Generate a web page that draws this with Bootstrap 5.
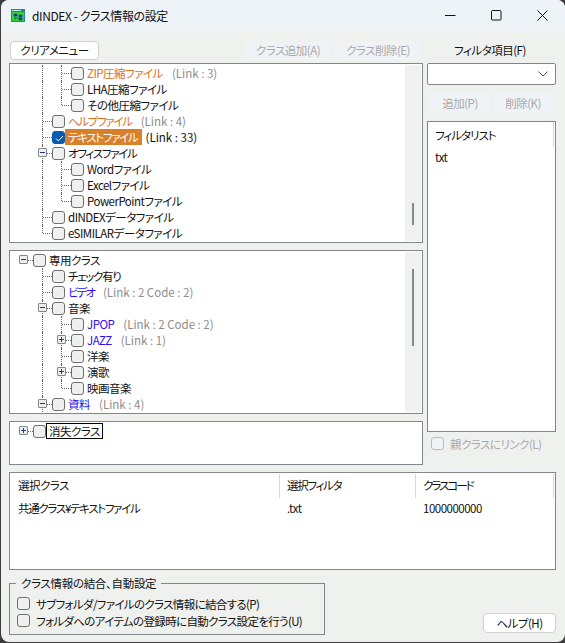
<!DOCTYPE html>
<html lang="ja">
<head>
    <meta charset="UTF-8">
    <title>dINDEX - クラス情報の設定</title>
    <link href="https://cdn.jsdelivr.net/npm/bootstrap@5.3.3/dist/css/bootstrap.min.css" rel="stylesheet">
    <style>
        html, body { height: 100%; }
        body { background: #3c3c3c; font: 11.5px/16px "Noto Sans CJK JP", sans-serif; font-feature-settings: "palt"; letter-spacing: -.5px; color: #111; overflow: hidden; white-space: nowrap; }
        .win { width: 564px; height: 642px; margin-left: 1px; background: #eff1ef; border-radius: 8px; overflow: hidden; }
        .titlebar { height: 31px; background: #eef3f8; font-size: 12px; letter-spacing: -.4px; }
        .title-icon { margin: 0 7px 0 10px; }
        .winbtn { width: 46px; height: 31px; }
        .client { height: 611px; padding: 10px 8px 0 8px; }
        .left-col { width: 414px; }
        .right-col { width: 129px; }
        .toolrow { height: 19px; margin: 0 2px 3px 1px; }
        .btn-win { height: 19px; padding: 0; font-size: 11.5px; font-feature-settings: "palt"; letter-spacing: -.5px; line-height: 17px; border-radius: 4px; border: 1px solid #d0d0d0; background: #fff; color: #111; }
        .btn-win:disabled { background: #f0f3f6; border-color: #f0f3f6; color: #a9a9a9; opacity: 1; }
        .btn-clear { width: 89px; }
        .btn-cls { width: 86px; }
        .panel { background: #fff; border: 1px solid #80868b; position: relative; overflow: hidden; padding-top: 1px; }
        .panel-a { height: 180px; margin-bottom: 7px; }
        .panel-b { height: 164px; margin-bottom: 7px; }
        .panel-c { height: 44px; }
        .fake-scroll { position: absolute; top: 1px; bottom: 1px; right: 1px; width: 16px; background: #eff1ef; }
        .fake-thumb { position: absolute; left: 7px; width: 2px; background: #858a8f; }
        .tw-row { height: 16px; display: flex; align-items: center; padding-left: 4px; white-space: nowrap; }
        .tw-cell { width: 19px; height: 16px; flex: none; position: relative; }
        .tw-v::before, .tw-t::before, .tw-l::before { content: ""; position: absolute; left: 9px; top: 0; bottom: 0; border-left: 1px dotted #666; }
        .tw-l::before { bottom: 8px; }
        .tw-t::after, .tw-l::after, .tw-h::after { content: ""; position: absolute; left: 10px; right: 0; top: 8px; border-top: 1px dotted #666; }
        .tw-x { position: absolute; z-index: 1; left: 5px; top: 3px; width: 9px; height: 9px; background: #eef0f0; border: 1px solid #80868b; border-radius: 1px; }
        .tw-x::before { content: ""; position: absolute; left: 1px; right: 1px; top: 3px; height: 1px; background: #23388c; }
        .tw-plus::after { content: ""; position: absolute; top: 1px; bottom: 1px; left: 3px; width: 1px; background: #23388c; }
        .chk { width: 13px; height: 13px; flex: none; background: #eff1ef; border: 1px solid #6e6e6e; border-radius: 3px; }
        .chk-on { background: #0a5cb0; border-color: #0a5cb0; position: relative; }
        .chk-off { background: #f0f3f6; border-color: #b8bcc0; }
        .chk-on svg { position: absolute; left: 1px; top: 1px; }
        .tw-text { padding: 0 3px; height: 16px; line-height: 16px; }
        .tw-link { color: #8d8d8d; margin-left: 6px; letter-spacing: 0; }
        .txt-kana { letter-spacing: -1.3px; }
        .txt-tight { letter-spacing: -2px; }
        .c-orange { color: #e07020; }
        .c-blue { color: #2a10f0; }
        .tw-sel { background: #d9802a; color: #fff; padding-right: 4px; }
        .tw-focus { outline: 1px solid #000; outline-offset: -1px; }
        .tw-on { color: #111; }
        .flt-label { height: 19px; margin-bottom: 3px; line-height: 19px; text-align: center; padding-right: 3px; }
        .flt-select { height: 22px; background: #fff; border: 1px solid #80868b; border-radius: 2px; padding-right: 7px; margin-bottom: 8px; }
        .flt-btns { gap: 3px; padding: 0 3px; margin-bottom: 7px; }
        .flt-btns .btn-win { flex: 1; height: 21px; }
        .flt-list { height: 311px; padding: 5px 7px; }
        .flt-head { height: 22px; line-height: 16px; letter-spacing: -1px; }
        .flt-sep { position: absolute; top: 0; right: 1px; width: 1px; height: 25px; background: #d8d8d8; }
        .parent-link { height: 21px; padding-left: 4px; gap: 6px; margin-top: 1px; color: #a9a9a9; }
        .detail { height: 98px; width: 547px; margin: 7px 0 13px 0; }
        .det-head { height: 24px; display: flex; }
        .det-row { display: flex; padding-top: 2px; }
        .dc-1 { width: 270px; padding-left: 8px; }
        .dc-2 { width: 136px; padding-left: 7px; }
        .dc-3 { width: 138px; padding-left: 7px; }
        .det-head .dc-1, .det-head .dc-2, .det-head .dc-3 { border-right: 1px solid #d8d8d8; height: 24px; padding-top: 3px; }
        .bottom-row { width: 547px; }
        .grp { width: 316px; height: 52px; border: 1px solid #80868b; position: relative; padding: 11px 7px 0 7px; }
        .grp-title { position: absolute; top: -9px; left: 6px; padding: 0 5px; background: #eff1ef; letter-spacing: -.3px; }
        .grp-item { height: 17px; gap: 6px; letter-spacing: -.65px; }
        .btn-help { width: 73px; height: 20px; margin-top: 30px; }
    </style>
</head>
<body>
    <div class="win d-flex flex-column">
        <div class="titlebar d-flex align-items-center">
            <svg class="title-icon" width="14" height="13" viewBox="0 0 14 13">
                <rect width="14" height="13" fill="#2a7f9a"/>
                <rect x="1" y="3" width="12" height="9" fill="#35d335"/>
                <rect x="1" y="1" width="9" height="1" fill="#bfe8f0"/>
                <path d="M3 5h3v2H3zM4 7v4M4 9h4M8 6h3v2H8zM8 9h3v2H8z" fill="#123d8c" stroke="#123d8c" stroke-width=".6"/>
            </svg>
            <span class="flex-grow-1">dINDEX - クラス情報の設定</span>
            <span class="winbtn d-flex align-items-center justify-content-center"><svg width="11" height="11"><path d="M0 5.5h10.5" stroke="#111"/></svg></span>
            <span class="winbtn d-flex align-items-center justify-content-center"><svg width="11" height="11"><rect x=".5" y=".5" width="9.5" height="9.5" rx="1" fill="none" stroke="#111"/></svg></span>
            <span class="winbtn d-flex align-items-center justify-content-center"><svg width="11" height="11"><path d="M.5.5l10 10M10.5.5l-10 10" stroke="#111"/></svg></span>
        </div>
        <div class="client d-flex flex-column">
            <div class="d-flex gap-1">
                <div class="left-col">
                    <div class="toolrow d-flex">
                        <button class="btn-win btn-clear">クリアメニュー</button>
                        <button class="btn-win btn-cls ms-auto" disabled>クラス追加(A)</button>
                        <button class="btn-win btn-cls ms-1" disabled>クラス削除(E)</button>
                    </div>
                    <div class="panel panel-a">
                        <div class="tw-row"><i class="tw-cell"></i><i class="tw-cell tw-v"></i><i class="tw-cell tw-t"></i><i class="chk"></i><span class="tw-text c-orange">ZIP圧縮ファイル</span><span class="tw-link">(Link : 3)</span></div>
                        <div class="tw-row"><i class="tw-cell"></i><i class="tw-cell tw-v"></i><i class="tw-cell tw-t"></i><i class="chk"></i><span class="tw-text">LHA圧縮ファイル</span></div>
                        <div class="tw-row"><i class="tw-cell"></i><i class="tw-cell tw-v"></i><i class="tw-cell tw-l"></i><i class="chk"></i><span class="tw-text">その他圧縮ファイル</span></div>
                        <div class="tw-row"><i class="tw-cell"></i><i class="tw-cell tw-t"></i><i class="chk"></i><span class="tw-text txt-kana c-orange">ヘルプファイル</span><span class="tw-link">(Link : 4)</span></div>
                        <div class="tw-row"><i class="tw-cell"></i><i class="tw-cell tw-t"></i><i class="chk chk-on"><svg width="11" height="11" viewBox="0 0 11 11"><path d="M2 5.5l2.4 2.4L9 3" fill="none" stroke="#fff" stroke-width="1"/></svg></i><span class="tw-text txt-kana tw-sel">テキストファイル</span><span class="tw-link tw-on ms-1">(Link : 33)</span></div>
                        <div class="tw-row"><i class="tw-cell"></i><i class="tw-cell tw-t"><b class="tw-x"></b></i><i class="chk"></i><span class="tw-text txt-kana">オフィスファイル</span></div>
                        <div class="tw-row"><i class="tw-cell"></i><i class="tw-cell tw-v"></i><i class="tw-cell tw-t"></i><i class="chk"></i><span class="tw-text">Wordファイル</span></div>
                        <div class="tw-row"><i class="tw-cell"></i><i class="tw-cell tw-v"></i><i class="tw-cell tw-t"></i><i class="chk"></i><span class="tw-text">Excelファイル</span></div>
                        <div class="tw-row"><i class="tw-cell"></i><i class="tw-cell tw-v"></i><i class="tw-cell tw-l"></i><i class="chk"></i><span class="tw-text">PowerPointファイル</span></div>
                        <div class="tw-row"><i class="tw-cell"></i><i class="tw-cell tw-t"></i><i class="chk"></i><span class="tw-text">dINDEXデータファイル</span></div>
                        <div class="tw-row"><i class="tw-cell"></i><i class="tw-cell tw-l"></i><i class="chk"></i><span class="tw-text">eSIMILARデータファイル</span></div>
                        <div class="fake-scroll"><div class="fake-thumb" style="top: 138px; height: 22px"></div></div>
                    </div>
                    <div class="panel panel-b">
                        <div class="tw-row"><i class="tw-cell tw-h"><b class="tw-x"></b></i><i class="chk"></i><span class="tw-text">専用クラス</span></div>
                        <div class="tw-row"><i class="tw-cell"></i><i class="tw-cell tw-t"></i><i class="chk"></i><span class="tw-text txt-kana">チェック有り</span></div>
                        <div class="tw-row"><i class="tw-cell"></i><i class="tw-cell tw-t"></i><i class="chk"></i><span class="tw-text txt-tight c-blue">ビデオ</span><span class="tw-link">(Link : 2 Code : 2)</span></div>
                        <div class="tw-row"><i class="tw-cell"></i><i class="tw-cell tw-t"><b class="tw-x"></b></i><i class="chk"></i><span class="tw-text">音楽</span></div>
                        <div class="tw-row"><i class="tw-cell"></i><i class="tw-cell tw-v"></i><i class="tw-cell tw-t"></i><i class="chk"></i><span class="tw-text c-blue">JPOP</span><span class="tw-link">(Link : 2 Code : 2)</span></div>
                        <div class="tw-row"><i class="tw-cell"></i><i class="tw-cell tw-v"></i><i class="tw-cell tw-t"><b class="tw-x tw-plus"></b></i><i class="chk"></i><span class="tw-text c-blue">JAZZ</span><span class="tw-link">(Link : 1)</span></div>
                        <div class="tw-row"><i class="tw-cell"></i><i class="tw-cell tw-v"></i><i class="tw-cell tw-t"></i><i class="chk"></i><span class="tw-text">洋楽</span></div>
                        <div class="tw-row"><i class="tw-cell"></i><i class="tw-cell tw-v"></i><i class="tw-cell tw-t"><b class="tw-x tw-plus"></b></i><i class="chk"></i><span class="tw-text">演歌</span></div>
                        <div class="tw-row"><i class="tw-cell"></i><i class="tw-cell tw-v"></i><i class="tw-cell tw-l"></i><i class="chk"></i><span class="tw-text">映画音楽</span></div>
                        <div class="tw-row"><i class="tw-cell"></i><i class="tw-cell tw-t"><b class="tw-x"></b></i><i class="chk"></i><span class="tw-text c-blue">資料</span><span class="tw-link">(Link : 4)</span></div>
                        <div class="fake-scroll"><div class="fake-thumb" style="top: 17px; height: 77px"></div></div>
                    </div>
                    <div class="panel panel-c">
                        <div class="tw-row"><i class="tw-cell tw-h"><b class="tw-x tw-plus"></b></i><i class="chk"></i><span class="tw-text tw-focus">消失クラス</span></div>
                    </div>
                </div>
                <div class="right-col">
                    <div class="flt-label">フィルタ項目(F)</div>
                    <div class="flt-select d-flex align-items-center justify-content-end">
                        <svg width="10" height="6"><path d="M.5.5L5 5 9.5.5" fill="none" stroke="#555"/></svg>
                    </div>
                    <div class="flt-btns d-flex">
                        <button class="btn-win" disabled>追加(P)</button>
                        <button class="btn-win" disabled>削除(K)</button>
                    </div>
                    <div class="panel flt-list">
                        <div class="flt-head">フィルタリスト</div>
                        <div>txt</div>
                        <div class="flt-sep"></div>
                    </div>
                    <div class="parent-link d-flex align-items-center"><i class="chk chk-off"></i><span>親クラスにリンク(L)</span></div>
                </div>
            </div>
            <div class="panel detail">
                <div class="det-head"><div class="dc-1">選択クラス</div><div class="dc-2 txt-kana">選択フィルタ</div><div class="dc-3 txt-tight">クラスコード</div></div>
                <div class="det-row"><div class="dc-1 txt-kana">共通クラス¥テキストファイル</div><div class="dc-2">.txt</div><div class="dc-3">1000000000</div></div>
            </div>
            <div class="bottom-row d-flex justify-content-between">
                <div class="grp">
                    <span class="grp-title">クラス情報の結合、自動設定</span>
                    <div class="grp-item d-flex align-items-center"><i class="chk"></i><span>サブフォルダ/ファイルのクラス情報に結合する(P)</span></div>
                    <div class="grp-item d-flex align-items-center"><i class="chk"></i><span>フォルダへのアイテムの登録時に自動クラス設定を行う(U)</span></div>
                </div>
                <button class="btn-win btn-help">ヘルプ(H)</button>
            </div>
        </div>
    </div>
    <script src="https://cdn.jsdelivr.net/npm/bootstrap@5.3.3/dist/js/bootstrap.bundle.min.js"></script>
</body>
</html>
